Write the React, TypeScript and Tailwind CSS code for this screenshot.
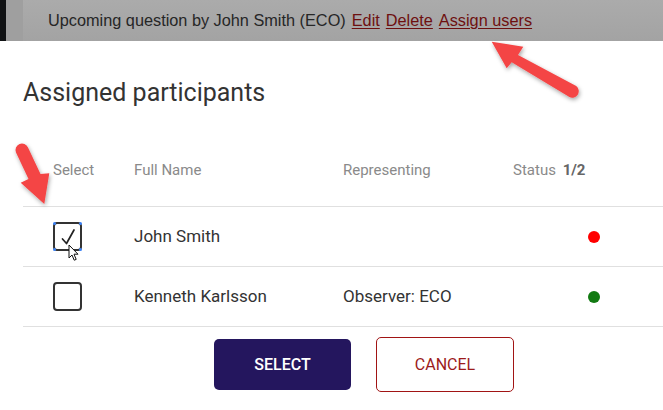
const Arrow = ({ className, d, id, vb }: { className: string; d: string; id: string; vb: string }) => (
  <svg className={className} viewBox={vb} fill="none">
    <defs>
      <filter id={id} x="-30%" y="-30%" width="160%" height="160%">
        <feDropShadow dx="1" dy="2" stdDeviation="2" floodColor="#000" floodOpacity="0.35" />
      </filter>
    </defs>
    <path d={d} fill="#f44545" filter={`url(#${id})`} />
  </svg>
)

const Checkbox = ({ checked }: { checked?: boolean }) => (
  <div className="relative h-[29px] w-[29px] rounded-[4px] border-2 border-[#333]">
    {checked && (
      <>
        <span className="absolute -left-[2px] -top-[2px] h-[3px] w-[3px] rounded-full bg-[#3b82f6]" />
        <span className="absolute -right-[2px] -top-[2px] h-[3px] w-[3px] rounded-full bg-[#3b82f6]" />
        <span className="absolute -left-[2px] -bottom-[2px] h-[3px] w-[3px] rounded-full bg-[#3b82f6]" />
        <span className="absolute -right-[2px] -bottom-[2px] h-[3px] w-[3px] rounded-full bg-[#3b82f6]" />
        <svg className="absolute -left-[2px] -top-[2px] h-[29px] w-[29px]" viewBox="0 0 29 29" fill="none">
          <path d="M9.5 17 L13.5 21.5 L21 8" stroke="#222" strokeWidth="1.7" strokeLinecap="round" strokeLinejoin="round" />
        </svg>
        {/* mouse cursor */}
        <svg className="absolute left-[13px] top-[20px] h-[18px] w-[12px]" viewBox="0 0 12 18">
          <path d="M1 1 L1 14 L4 11 L6.2 16.2 L8.2 15.4 L6 10.2 L10 10.2 Z" fill="#fff" stroke="#111" strokeWidth="1" strokeLinejoin="round" />
        </svg>
      </>
    )}
  </div>
)

const rows = [
  { name: 'John Smith', rep: '', ok: false, checked: true },
  { name: 'Kenneth Karlsson', rep: 'Observer: ECO', ok: true, checked: false },
]

export default function App() {
  return (
    <div className="relative h-[410px] w-[663px] overflow-hidden bg-white font-['Roboto',sans-serif]">
      {/* page behind the dialog */}
      <div className="flex h-[41px] bg-gradient-to-b from-[#ababab] to-[#a3a3a3]">
        <div className="w-[6px] bg-[#101214]" />
        <div className="w-[17px] bg-[#9f9f9f]" />
        <div className="flex items-center gap-[6px] pl-[25px] pb-[1px] font-['Liberation_Sans',Arial,sans-serif] text-[16.3px] text-[#262626]">
          <span>Upcoming question by John Smith (ECO)</span>
          <a className="text-[#6e1010] underline underline-offset-2">Edit</a>
          <a className="text-[#6e1010] underline underline-offset-2">Delete</a>
          <a className="text-[#6e1010] underline underline-offset-2">Assign users</a>
        </div>
      </div>

      {/* dialog */}
      <div className="pl-[23px]">
        <h2 className="pt-[36px] text-[25px] leading-[32px] text-[#333]">Assigned participants</h2>

        <div className="mt-[50px] flex h-[47px] items-start text-[15px] text-[#8a8a8a]">
          <div className="w-[111px] pl-[30px]">Select</div>
          <div className="w-[209px]">Full Name</div>
          <div className="w-[170px]">Representing</div>
          <div>
            Status <span className="ml-[3px] font-bold text-[#666]">1/2</span>
          </div>
        </div>

        <div className="border-t border-[#e0e0e0]">
          {rows.map((r) => (
            <div key={r.name} className="flex h-[60px] items-center border-b border-[#e0e0e0] text-[17px] text-[#333]">
              <div className="w-[111px] pl-[30px]">
                <Checkbox checked={r.checked} />
              </div>
              <div className="w-[209px]">{r.name}</div>
              <div className="w-[245px]">{r.rep}</div>
              <span className={`h-[12px] w-[12px] rounded-full ${r.ok ? 'bg-[#127a12]' : 'bg-[#ff0000]'}`} />
            </div>
          ))}
        </div>

        <div className="flex gap-[25px] pl-[191px] pt-[12px]">
          <button className="flex h-[51px] w-[137px] items-center justify-center rounded-[5px] bg-[#24165e] text-[16px] font-medium text-white">
            SELECT
          </button>
          <button className="-mt-[2px] flex h-[55px] w-[138px] items-center justify-center rounded-[5px] border border-[#a11414] text-[16px] text-[#9c1b1b]">
            CANCEL
          </button>
        </div>
      </div>

      {/* annotation arrows */}
      <Arrow
        id="sh1"
        vb="0 0 130 80"
        className="absolute left-[470px] top-[30px] h-[80px] w-[130px]"
        d="M21.7 11.7 L53.3 16.7 L48 25 L106.2 56.1 A6.5 6.5 0 0 1 99.4 67.1 L41.7 32.3 L36.7 38.3 Z"
      />
      <Arrow
        id="sh2"
        vb="0 0 60 80"
        className="absolute left-[0px] top-[130px] h-[80px] w-[60px]"
        d="M16 22.5 A6.5 6.5 0 0 1 28 17.5 L40.5 44 L49.3 43.3 L44.3 74 L20.7 52.7 L28.5 49 Z"
      />
    </div>
  )
}
